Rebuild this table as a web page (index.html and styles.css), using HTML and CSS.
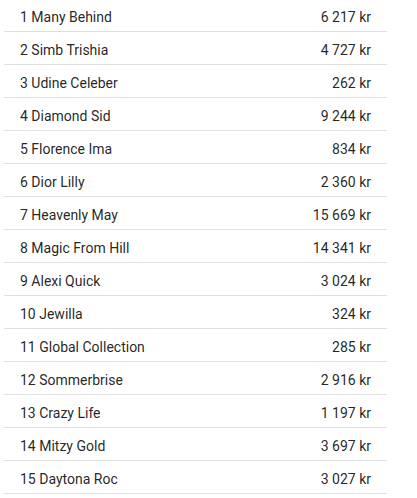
FILE: index.html
```html
<!DOCTYPE html>
<html lang="sv">
<head>
<meta charset="utf-8">
<title>Lista</title>
<link rel="stylesheet" href="styles.css">
</head>
<body>
<ul class="list">
  <li class="row"><span class="name">1 Many Behind</span><span class="amount">6 217 kr</span></li>
  <li class="row"><span class="name">2 Simb Trishia</span><span class="amount">4 727 kr</span></li>
  <li class="row"><span class="name">3 Udine Celeber</span><span class="amount">262 kr</span></li>
  <li class="row"><span class="name">4 Diamond Sid</span><span class="amount">9 244 kr</span></li>
  <li class="row"><span class="name">5 Florence Ima</span><span class="amount">834 kr</span></li>
  <li class="row"><span class="name">6 Dior Lilly</span><span class="amount">2 360 kr</span></li>
  <li class="row"><span class="name">7 Heavenly May</span><span class="amount">15 669 kr</span></li>
  <li class="row"><span class="name">8 Magic From Hill</span><span class="amount">14 341 kr</span></li>
  <li class="row"><span class="name">9 Alexi Quick</span><span class="amount">3 024 kr</span></li>
  <li class="row"><span class="name">10 Jewilla</span><span class="amount">324 kr</span></li>
  <li class="row"><span class="name">11 Global Collection</span><span class="amount">285 kr</span></li>
  <li class="row"><span class="name">12 Sommerbrise</span><span class="amount">2 916 kr</span></li>
  <li class="row"><span class="name">13 Crazy Life</span><span class="amount">1 197 kr</span></li>
  <li class="row"><span class="name">14 Mitzy Gold</span><span class="amount">3 697 kr</span></li>
  <li class="row"><span class="name">15 Daytona Roc</span><span class="amount">3 027 kr</span></li>
</ul>
</body>
</html>
```
FILE: styles.css
```css
html, body {
  margin: 0;
  padding: 0;
  background: #ffffff;
}

body {
  font-family: Roboto, "Liberation Sans", Arial, sans-serif;
  font-size: 14px;
  line-height: 20px;
  color: rgba(0, 0, 0, 0.87);
}

.list {
  list-style: none;
  margin: -1px 0 0 4px;
  padding: 0;
  width: 383px;
}

.row {
  display: flex;
  justify-content: space-between;
  align-items: flex-start;
  box-sizing: border-box;
  height: 33px;
  padding: 8px 16px 4px 16px;
  border-bottom: 1px solid #e0e0e0;
}

.row > span {
  display: block;
  height: 20px;
}

.amount {
  text-align: right;
}
```
